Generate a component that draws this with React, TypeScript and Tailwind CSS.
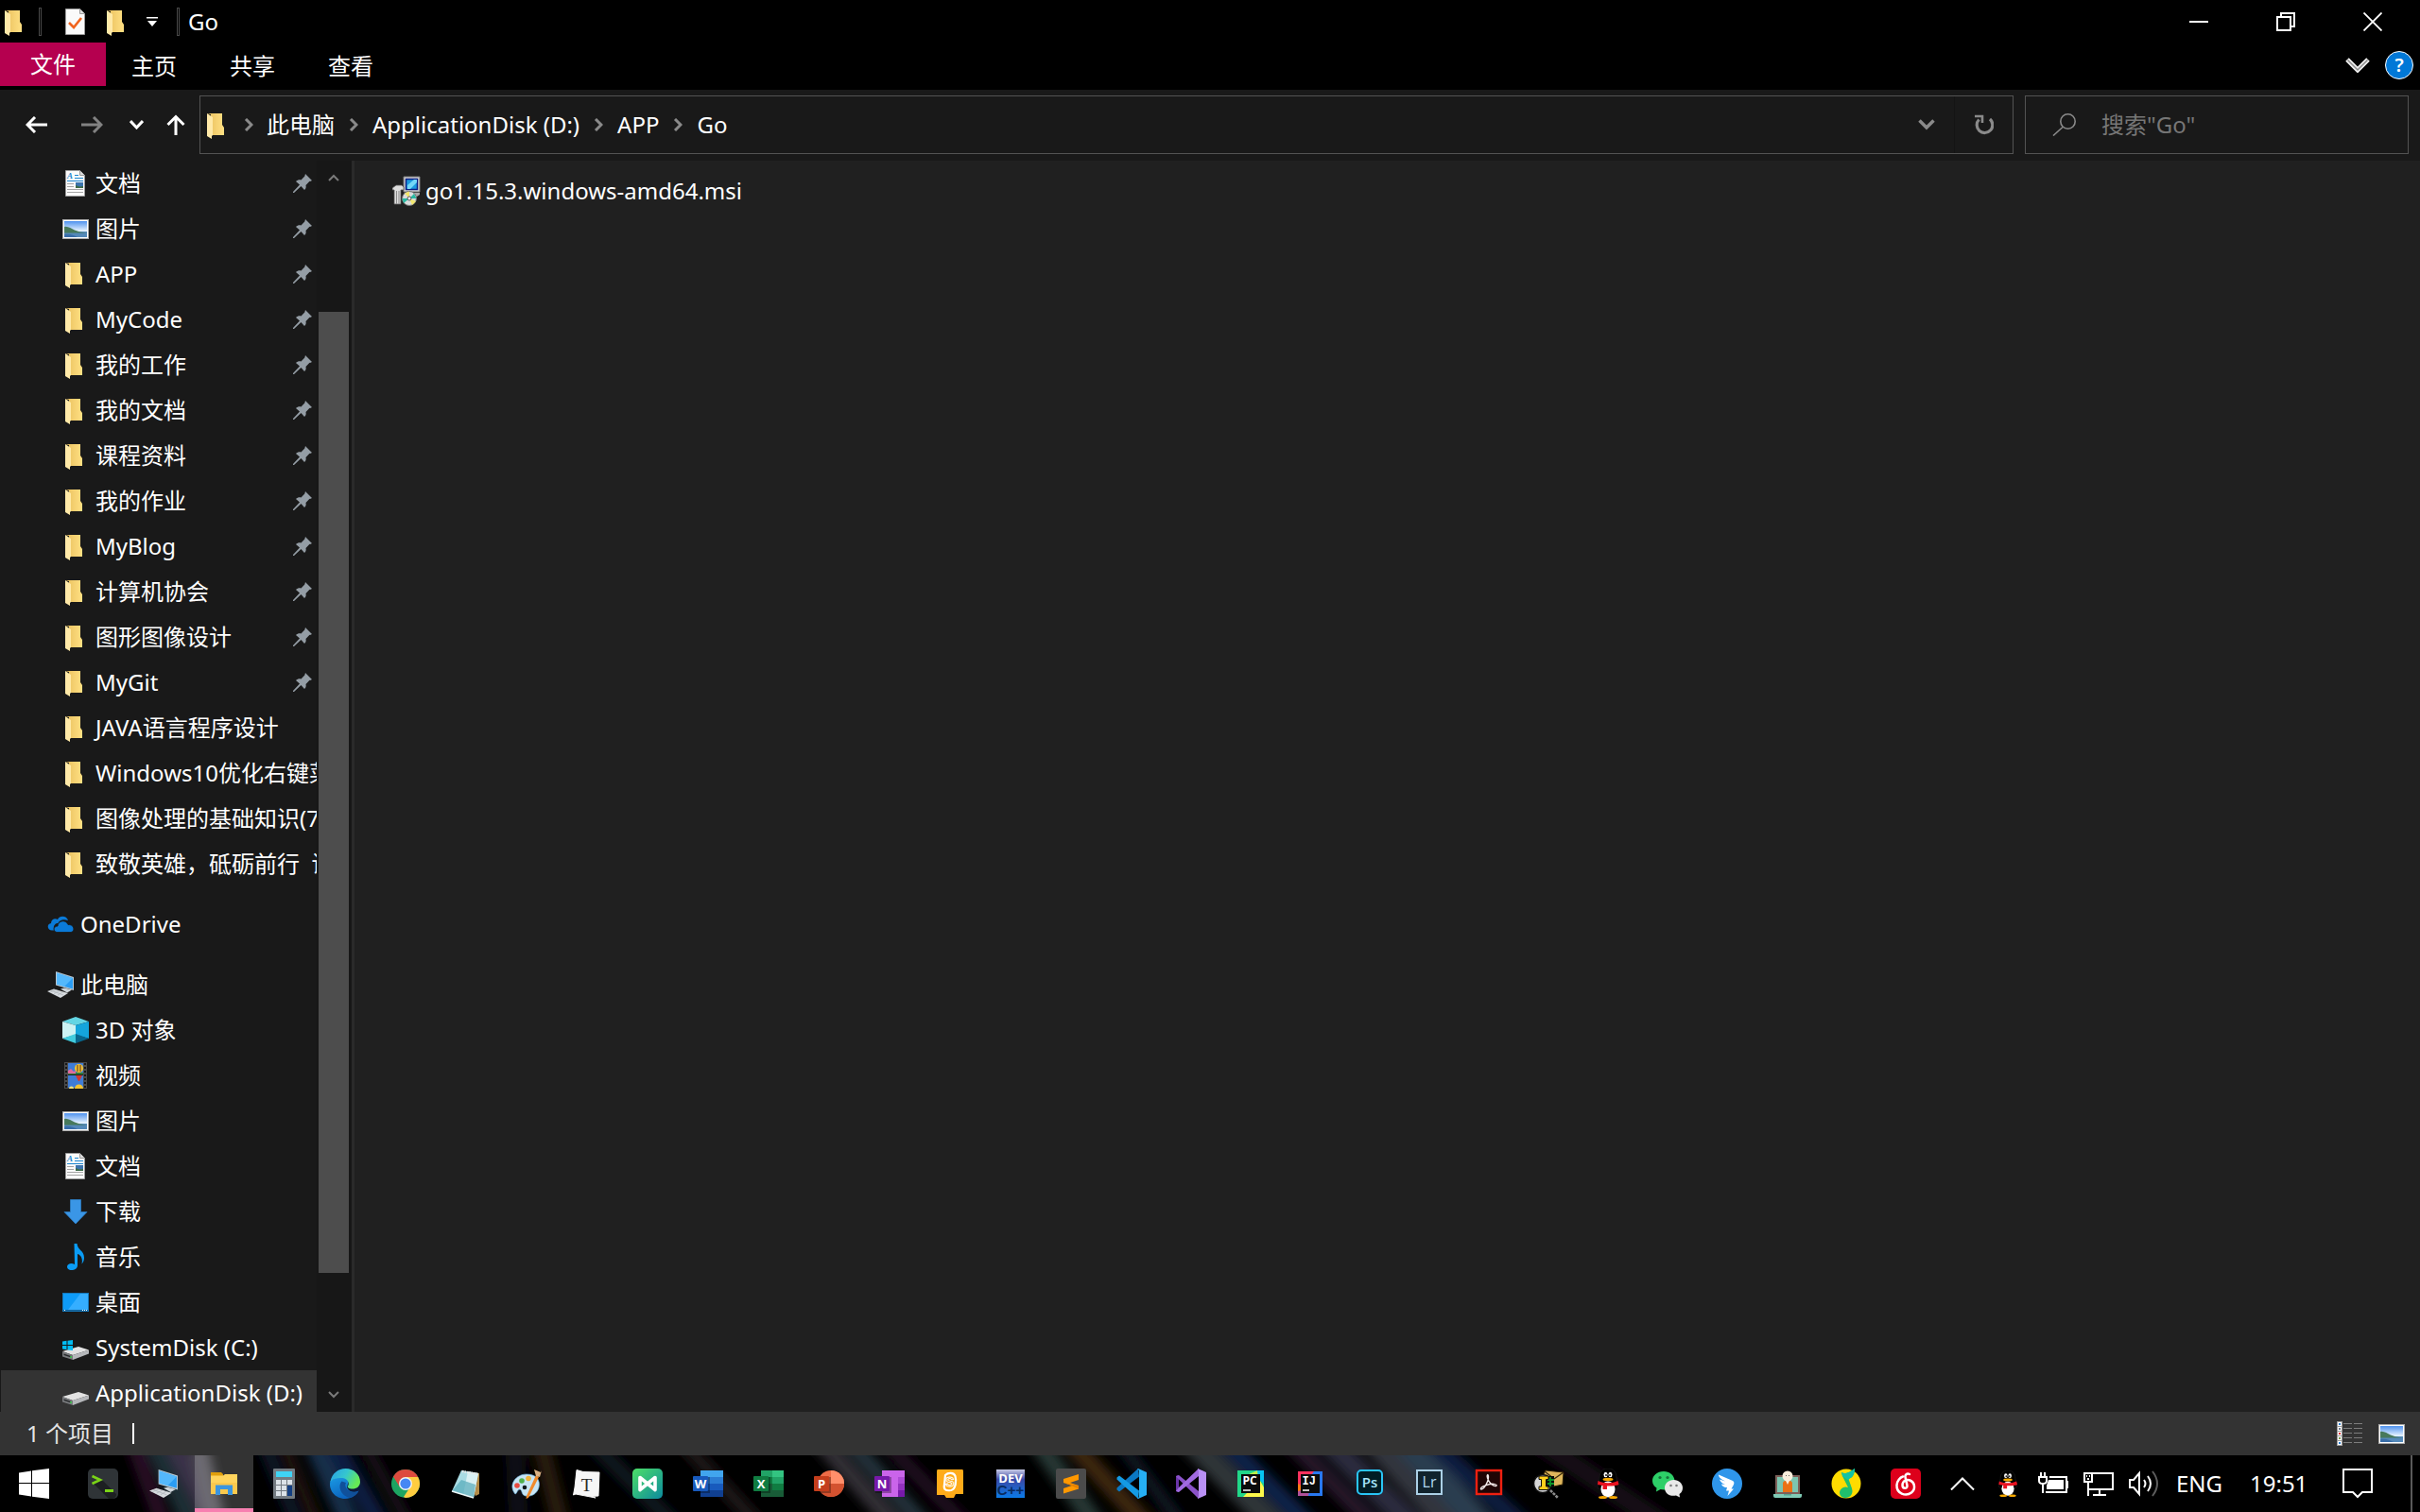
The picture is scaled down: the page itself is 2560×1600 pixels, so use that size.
import React from 'react';

type IconProps = { className?: string };

/* ---------- explorer icons, 28px grid ---------- */

function FolderIcon({ className = 'size-7' }: IconProps) {
  return (
    <svg viewBox="0 0 28 28" className={`${className} shrink-0 overflow-visible`}>
      <defs>
        <linearGradient id="folderBack" x1="0" x2="1">
          <stop offset="0" stopColor="#e9bf5c" />
          <stop offset="1" stopColor="#ffe083" />
        </linearGradient>
      </defs>
      <path d="M3 2H19V14L21 17V25H7V3Z" fill="url(#folderBack)" />
      <path d="M3 2L9 6V25L8 26V29L3 26Z" fill="#ffe9a8" />
    </svg>
  );
}

function DocumentIcon() {
  return (
    <svg viewBox="0 0 28 28" className="size-7 shrink-0">
      <path d="M3.500 .500H18.500L23.500 5.500V27.500H3.500Z" fill="#fafafa" stroke="#9b9b9b" />
      <path d="M18.500 .500V5.500H23.500" fill="#ddd" stroke="#9b9b9b" />
      <text x="5" y="9" fontSize="9" fontWeight="bold" fontStyle="italic" fill="#1b86d0" className="font-['Liberation_Serif',serif]">A</text>
      <path d="M13 5.500H17M13 8.500H22M5 11.500H22" stroke="#1b86d0" />
      <path d="M5 14.500H12M5 17.500H12M5 20.500H22M5 23.500H22" stroke="#a5a5a5" />
      <rect x="14" y="13" width="8" height="6" fill="#3b74ad" />
      <path d="M14 16L18 17.500L22 17V19H14Z" fill="#3d6b48" />
    </svg>
  );
}

function PictureIcon() {
  return (
    <svg viewBox="0 0 28 28" className="size-7 shrink-0">
      <defs>
        <linearGradient id="sky" x1="0" y1="0" x2="0" y2="1">
          <stop offset="0" stopColor="#4f92ee" />
          <stop offset=".6" stopColor="#e4f1ff" />
        </linearGradient>
      </defs>
      <rect x=".5" y="4.500" width="27" height="20" fill="#fff" stroke="#a8a8a8" />
      <rect x="2" y="6" width="24" height="17" fill="url(#sky)" />
      <path d="M2 17H26V23H2Z" fill="#5489b9" />
      <path d="M2 12C6 11 9 14 13 15.500S20 18 26 18.500H2Z" fill="#47795b" />
      <path d="M2 20C8 19 12 21 16 23H2Z" fill="#386da8" />
    </svg>
  );
}

function OneDriveIcon() {
  return (
    <svg viewBox="0 0 28 28" className="size-7 shrink-0">
      <path d="M5 20.500C0 20.500 -1 13.500 4 13C4 9 8 7 11 9C13 4 21 5 22 10C16 8 12 11 11.500 13C8 13 6 16 7 20.500Z" fill="#0a7ad8" />
      <path d="M10 22.500C6 22 6 16 11 16C11 11 19 8 22 14.500C29 14 29.500 22 25 22.500Z" fill="#0a7ad8" stroke="#191919" strokeWidth=".8" />
    </svg>
  );
}

function ComputerIcon({ className = 'size-7' }: IconProps) {
  return (
    <svg viewBox="0 0 28 28" className={`${className} shrink-0`}>
      <path d="M9 0L28 6V20L9 14.500Z" fill="#b9c9d4" />
      <path d="M10 1.500L27 7V18.500L10 13.500Z" fill="#2a9df4" />
      <path d="M10 1.500L27 7L18 16L10 13.500Z" fill="#54b8fb" />
      <path d="M14 18.500L18 17.500L26 19.500L21 22.500Z" fill="#cfd6db" />
      <path d="M0 21L7 18.500L22 23L14 28Z" fill="#d7dbdf" />
      <path d="M3 22L9 19.500M7 23.500L13 20.500M11 25L17 21.500M4 20L17 25" stroke="#a7aeb4" strokeWidth=".6" />
    </svg>
  );
}

function CubeIcon() {
  return (
    <svg viewBox="0 0 28 28" className="size-7 shrink-0">
      <path d="M14 0L28 5L14 9L0 5Z" fill="#63d5e3" />
      <path d="M0 5L14 9V19L0 23Z" fill="#cdf2f3" />
      <path d="M28 5L14 9V19L28 23Z" fill="#14a5dc" />
      <path d="M0 23L14 18V28Z" fill="#41cbdd" />
      <path d="M28 23L14 18V28Z" fill="#08678d" />
    </svg>
  );
}

function VideoIcon() {
  return (
    <svg viewBox="0 0 28 28" className="size-7 shrink-0">
      <path d="M2 0H26V28H2Z" fill="#4b4b4b" />
      <path d="M4 1V28M24 1V28" stroke="#171717" strokeWidth="2" strokeDasharray="2 2" />
      <path d="M6 1H22V27H6Z" fill="#3f7cd6" />
      <path d="M6 11H22V13H6Z" fill="#2f7b3a" />
      <path d="M6 13H22V14H6Z" fill="#222" />
      <path d="M6 9L9 7L12 10L14 9V12H6Z" fill="#e26a9b" />
      <circle cx="17.500" cy="6.500" r="4.500" fill="#f4c430" />
      <path d="M16 3V10M19 3V10" stroke="#5a2a20" />
      <path d="M14 14H21L18 20H17Z" fill="#d2372c" />
      <path d="M13 28A4.500 4.500 0 0 1 22 28Z" fill="#f4c430" />
      <path d="M7 28A2.500 2.500 0 0 1 12 28Z" fill="#f2e27b" />
    </svg>
  );
}

function DownloadIcon() {
  return (
    <svg viewBox="0 0 28 28" className="size-7 shrink-0">
      <path d="M8.500 1.500H19.500V14.500H26L14 27L2 14.500H8.500Z" fill="#3a96e6" stroke="#2d7fc7" strokeWidth=".8" />
    </svg>
  );
}

function MusicIcon() {
  return (
    <svg viewBox="0 0 28 28" className="size-7 shrink-0">
      <path d="M12.500 0H15.500C16 7 23 7 23 15C23 18 22 20 20.500 21.500C22 15 19 12 16 11V23C16 29 5 30 5 24.500C5 21 10 20 13 22Z" fill="#0a9cf5" />
    </svg>
  );
}

function DesktopIcon() {
  return (
    <svg viewBox="0 0 28 28" className="size-7 shrink-0">
      <rect x=".5" y="4.500" width="27" height="19" fill="#0e9bf8" stroke="#1579bd" />
      <path d="M19 5H27V22H6Z" fill="#35aeff" />
      <path d="M1 22.500H27" stroke="#125e93" />
      <path d="M2 22.500H3M21 22.500H22M23 22.500H24M25 22.500H26" stroke="#fff" />
    </svg>
  );
}

function DriveIcon({ system = false }: { system?: boolean }) {
  return (
    <svg viewBox="0 0 28 28" className="size-7 shrink-0">
      <path d="M0 18L17 13L28 16.500L11 22Z" fill="#e3e3e3" />
      <path d="M28 16.500V20.500L11 27V22Z" fill="#b5b7ba" />
      <path d="M0 18L11 22V27L0 23.500Z" fill="#77797c" />
      <path d="M1.500 20.500L9 23V24.500L1.500 22Z" fill="#26282a" />
      <path d="M8 24H10" stroke="#3ad14a" strokeWidth="1.500" />
      {system && <path d="M0 7.500L4.500 6.800V11H0ZM5.500 6.700L11 6V11H5.500ZM0 12H4.500V16.300L0 15.600ZM5.500 12H11V17L5.500 16.400Z" fill="#00bcf2" />}
    </svg>
  );
}

function PinIcon() {
  return (
    <svg viewBox="0 0 20 20" className="mr-[5px] ml-auto size-5 shrink-0">
      <path d="M13 0L20 7L18 8L17.500 7.800L13.500 12C14 14 13.500 16 12 17L8.500 13L1 20H0V19L7 11.500L3 8C4.500 6.500 6.500 6 8.500 6.500L12.300 2.500Z" fill="#949da5" />
    </svg>
  );
}

function InstallerIcon() {
  return (
    <svg viewBox="0 0 30 32" className="h-8 w-[30px] shrink-0">
      <path d="M12 1H29V17H12Z" fill="#d8d8d8" stroke="#777" />
      <path d="M14.500 3.500H26.500V14.500H14.500Z" fill="#1b9ae0" stroke="#0b1e83" strokeWidth="1.500" />
      <path d="M16 10L23 4H26V7L19 14H16Z" fill="#73d7f7" />
      <path d="M18 18H29V20L26 22H18Z" fill="#a9a9a9" />
      <path d="M0 13L4 10H10L12 12V15H9V30H2V15H0Z" fill="#dedede" stroke="#555" strokeWidth=".8" />
      <path d="M4.500 16V30M7 16V30" stroke="#8b8b8b" />
      <circle cx="18" cy="24" r="7.500" fill="#d9dcdc" stroke="#747474" />
      <path d="M18 24L13 18.500L18 16.500ZM18 24L21 31L25 27Z" fill="#f2e66d" />
      <path d="M18 24L25.500 24L23 19ZM18 24L12 29L10.500 24Z" fill="#28b9a2" />
      <circle cx="18" cy="24" r="2" fill="#fff" stroke="#555" />
    </svg>
  );
}

function Chevron({ className = '' }: IconProps) {
  return (
    <svg viewBox="0 0 10 14" fill="none" strokeWidth="3" className={`h-[14px] w-[10px] shrink-0 stroke-[#8a8a8a] ${className}`}>
      <path d="M2 1L8 7L2 13" />
    </svg>
  );
}

/* ---------- sidebar data ---------- */

type Row = { label: string; icon: React.ReactNode; pinned?: boolean; root?: boolean; active?: boolean };

const quickAccess: Row[] = [
  { label: '文档', icon: <DocumentIcon />, pinned: true },
  { label: '图片', icon: <PictureIcon />, pinned: true },
  { label: 'APP', icon: <FolderIcon />, pinned: true },
  { label: 'MyCode', icon: <FolderIcon />, pinned: true },
  { label: '我的工作', icon: <FolderIcon />, pinned: true },
  { label: '我的文档', icon: <FolderIcon />, pinned: true },
  { label: '课程资料', icon: <FolderIcon />, pinned: true },
  { label: '我的作业', icon: <FolderIcon />, pinned: true },
  { label: 'MyBlog', icon: <FolderIcon />, pinned: true },
  { label: '计算机协会', icon: <FolderIcon />, pinned: true },
  { label: '图形图像设计', icon: <FolderIcon />, pinned: true },
  { label: 'MyGit', icon: <FolderIcon />, pinned: true },
  { label: 'JAVA语言程序设计', icon: <FolderIcon /> },
  { label: 'Windows10优化右键菜', icon: <FolderIcon /> },
  { label: '图像处理的基础知识(7', icon: <FolderIcon /> },
  { label: '致敬英雄，砥砺前行  讲', icon: <FolderIcon /> },
];

const thisPc: Row[] = [
  { label: '此电脑', icon: <ComputerIcon />, root: true },
  { label: '3D 对象', icon: <CubeIcon /> },
  { label: '视频', icon: <VideoIcon /> },
  { label: '图片', icon: <PictureIcon /> },
  { label: '文档', icon: <DocumentIcon /> },
  { label: '下载', icon: <DownloadIcon /> },
  { label: '音乐', icon: <MusicIcon /> },
  { label: '桌面', icon: <DesktopIcon /> },
  { label: 'SystemDisk (C:)', icon: <DriveIcon system /> },
  { label: 'ApplicationDisk (D:)', icon: <DriveIcon />, active: true },
];

function NavGroup({ rows }: { rows: Row[] }) {
  return (
    <ul>
      {rows.map((row, i) => (
        <li key={i} className={row.active ? 'ml-px bg-[#333333]' : 'ml-px'}>
          <button className={`flex h-12 w-full items-center gap-[7px] text-left whitespace-pre hover:bg-[#2b2b2b] ${row.root ? 'pl-[49px]' : 'pl-[65px]'}`}>
            {row.icon}
            <span>{row.label}</span>
            {row.pinned && <PinIcon />}
          </button>
        </li>
      ))}
    </ul>
  );
}

/* ---------- taskbar icons, 32px grid ---------- */

function Tile({ children }: { children: React.ReactNode }) {
  return (
    <svg viewBox="0 0 32 32" className="size-8 shrink-0 overflow-visible">
      {children}
    </svg>
  );
}

function OfficeTile({ letter, dark, children }: { letter: string; dark: string; children: React.ReactNode }) {
  return (
    <Tile>
      {children}
      <rect x="1" y="9" width="17" height="17" fill="#000" opacity=".3" />
      <rect x="0" y="8" width="16" height="16" rx="1" fill={dark} />
      <text x="8" y="20.500" textAnchor="middle" fontSize="13" fontWeight="bold" fill="#fff" className="font-['Open_Sans',sans-serif]">{letter}</text>
    </Tile>
  );
}

function Penguin({ className = 'size-8' }: IconProps) {
  return (
    <svg viewBox="0 0 32 32" className={`${className} shrink-0`}>
      <path d="M16 0C22 0 25 4 25 10L26 15L27 20L24 22C24 28 21 31 16 31S8 28 8 22L5 20L6 15L7 10C7 4 10 0 16 0Z" fill="#000" stroke="#161616" />
      <ellipse cx="16" cy="22" rx="7.500" ry="8.500" fill="#fff" />
      <ellipse cx="13.500" cy="6.500" rx="2" ry="2.700" fill="#fff" />
      <ellipse cx="18.500" cy="6.500" rx="2" ry="2.700" fill="#fff" />
      <circle cx="14" cy="7" r=".9" />
      <circle cx="18" cy="7" r=".9" />
      <ellipse cx="16" cy="11.500" rx="5.500" ry="1.700" fill="#f5a800" />
      <path d="M5.500 13C12 16 20 16 26.500 13L27.500 17C24 18.500 19 18.700 15 18.500V22H10.500V18L5 17Z" fill="#e9121f" />
      <ellipse cx="10.500" cy="30.500" rx="4.500" ry="1.500" fill="#f5a800" />
      <ellipse cx="21.500" cy="30.500" rx="4.500" ry="1.500" fill="#f5a800" />
    </svg>
  );
}

const wideApps = [
  {
    name: 'Terminal',
    icon: (
      <Tile>
        <rect width="32" height="32" rx="5" fill="#2f3437" />
        <path d="M5 15L14 11L30 27V28A5 5 0 0 1 27 32H22Z" fill="#1d2022" />
        <path d="M4.500 8L13 12L4.500 16" fill="none" stroke="#7ad317" strokeWidth="2.600" />
        <path d="M18 23.500H27" stroke="#7ad317" strokeWidth="3" />
      </Tile>
    ),
  },
  { name: '此电脑', icon: <ComputerIcon className="size-[30px]" /> },
  {
    name: '文件资源管理器',
    active: true,
    icon: (
      <Tile>
        <path d="M2 4H13L15 6V9H2Z" fill="#e09f0c" />
        <path d="M2 7.500H15L17 6H30V27H2Z" fill="#ffd45d" />
        <path d="M2 15H30V27H2Z" fill="#fbc94d" />
        <path d="M7 28V17.500H25V28H20V22H12V28Z" fill="#3b95df" />
      </Tile>
    ),
  },
  {
    name: '计算器',
    icon: (
      <Tile>
        <rect x="4" y="0" width="23" height="32" rx="1" fill="#737b82" />
        <rect x="7" y="3" width="17" height="6" fill="#3fd3f5" />
        <path d="M7 12H12V17H7ZM13 12H18V17H13ZM19 12H24V17H19ZM7 18H12V23H7ZM13 18H18V23H13ZM7 24H12V29H7ZM13 24H18V29H13Z" fill="#dbe2e8" />
        <rect x="19" y="18" width="5" height="11" fill="#143f82" />
      </Tile>
    ),
  },
  {
    name: 'Edge',
    icon: (
      <Tile>
        <defs>
          <linearGradient id="edgeTop" x1="0" y1="0" x2="1" y2=".4">
            <stop offset=".1" stopColor="#2aa7e4" />
            <stop offset=".55" stopColor="#35c6cf" />
            <stop offset="1" stopColor="#66ea55" />
          </linearGradient>
          <linearGradient id="edgeLeft" x1="0" y1="0" x2=".5" y2="1">
            <stop offset="0" stopColor="#1b9ee6" />
            <stop offset="1" stopColor="#0b62be" />
          </linearGradient>
        </defs>
        <path d="M.5 13C-2 23 6 32 16 32C23 32 28 28 30.500 23.500C26 26 20 25 18 20L20 12L12 7Z" fill="url(#edgeLeft)" />
        <path d="M12.500 13.500C8 18 11 29 21 31C25 30 29 27 30.500 23.500C27 26 20 25.500 17.500 21C16 18.500 16 17 17 15Z" fill="#10509a" />
        <path d="M.5 14C2 5 9 0 16.500 0C26 0 32 7 32 14C32 19 28 21.500 24 21.500C20 21.500 18 20 19 18.500C21 16 19 10.500 13.500 10C8 9.500 3 11 .5 14Z" fill="url(#edgeTop)" />
      </Tile>
    ),
  },
  {
    name: 'Chrome',
    icon: (
      <Tile>
        <circle cx="16" cy="16" r="15" fill="#1da462" />
        <path d="M29 8.500A15 15 0 0 1 16 31L14 30L22 18L16 9H29.200Z" fill="#ffcd40" />
        <path d="M16 9H29.200A15 15 0 0 0 3 8.500L9.500 19Z" fill="#dd4b3e" />
        <circle cx="16" cy="16" r="7" fill="#f3f3f3" />
        <circle cx="16" cy="16" r="5.600" fill="#4687f4" />
      </Tile>
    ),
  },
  {
    name: '记事本',
    icon: (
      <Tile>
        <path d="M13 3L30 5V27L26 29Z" fill="#b28a47" />
        <path d="M11 2L29 5L24 31L1 24Z" fill="#a9dce4" />
        <path d="M18 3L29 5L24 31L13 27.500Z" fill="#d9f1f4" />
        <path d="M11 12L26 17L24 31L1 24Z" fill="#56a9b9" opacity=".7" />
        <path d="M12 3L28 6" stroke="#e8e8e8" strokeWidth="2.500" strokeDasharray="1.500 1" />
        <path d="M1 24L24 31" stroke="#edf8fa" strokeWidth="1.500" />
      </Tile>
    ),
  },
  {
    name: '画图',
    icon: (
      <Tile>
        <path d="M4 27C-4 17 5 6 16 6C26 6 31 12 29 20C27 27 21 30 15 29C10 28 12 23 9 22C6 22 6 27 4 27Z" fill="#c7e4f5" stroke="#6fb1d8" strokeWidth=".7" />
        <circle cx="6" cy="18" r="2.800" fill="#e84a3f" />
        <circle cx="11" cy="13" r="2.800" fill="#4fb04d" />
        <circle cx="18" cy="10.500" r="2.800" fill="#f0b33c" />
        <circle cx="14" cy="20" r="2.300" fill="#11161c" />
        <path d="M26 7L29 9L18 31L15.500 32L16 29Z" fill="#f08a2c" />
        <path d="M24 1L31 4L32 2L30 9L26 8Z" fill="#d9b083" />
      </Tile>
    ),
  },
  {
    name: 'Typora',
    icon: (
      <Tile>
        <path d="M5 1.500L12 3.500L29 4L28 29L21 29.500L25 31L4 27L1.500 28L3 20Z" fill="#f6f6f6" stroke="#f6f6f6" strokeLinejoin="round" />
        <text x="15.500" y="23.500" fontSize="19" textAnchor="middle" fill="#2b2b2b" className="font-['Liberation_Serif',serif]">T</text>
      </Tile>
    ),
  },
  {
    name: 'MindMaster',
    icon: (
      <Tile>
        <defs>
          <linearGradient id="mind" x1="0" y1="0" x2="1" y2="1">
            <stop offset="0" stopColor="#4ddf67" />
            <stop offset="1" stopColor="#0c8b9e" />
          </linearGradient>
        </defs>
        <rect width="32" height="32" rx="5" fill="url(#mind)" />
        <path d="M8 22.500V9.500L24 22.500V9.500L8 22.500Z" fill="none" stroke="#fff" strokeWidth="3.600" strokeLinejoin="round" />
      </Tile>
    ),
  },
  {
    name: 'Word',
    icon: (
      <OfficeTile letter="W" dark="#185abd">
        <path d="M8 2H32V9H8Z" fill="#41a5ee" />
        <path d="M8 9H32V16H8Z" fill="#2b7cd3" />
        <path d="M8 16H32V23H8Z" fill="#185abd" />
        <path d="M8 23H32V30H8Z" fill="#103f91" />
      </OfficeTile>
    ),
  },
  {
    name: 'Excel',
    icon: (
      <OfficeTile letter="X" dark="#107c41">
        <path d="M8 2H20V9H8Z" fill="#21a366" />
        <path d="M20 2H32V9H20Z" fill="#33c481" />
        <path d="M8 9H20V16H8Z" fill="#107c41" />
        <path d="M20 9H32V16H20Z" fill="#21a366" />
        <path d="M8 16H20V30H8Z" fill="#185c37" />
        <path d="M20 16H32V23H20Z" fill="#107c41" />
        <path d="M20 23H32V30H20Z" fill="#185c37" />
      </OfficeTile>
    ),
  },
  {
    name: 'PowerPoint',
    icon: (
      <OfficeTile letter="P" dark="#c43e1c">
        <circle cx="18" cy="16" r="14" fill="#ed6c47" />
        <path d="M18 2A14 14 0 0 1 32 16H18Z" fill="#ff8f6b" />
        <path d="M4 16H32A14 14 0 0 1 4 16Z" fill="#d35230" />
      </OfficeTile>
    ),
  },
  {
    name: 'OneNote',
    icon: (
      <OfficeTile letter="N" dark="#7719aa">
        <path d="M8 2H32V30H8Z" fill="#ca64ea" />
        <path d="M25 9H32V16H25Z" fill="#ae4bd5" />
        <path d="M25 16H32V23H25Z" fill="#9332bf" />
        <path d="M25 23H32V30H25Z" fill="#7719aa" />
      </OfficeTile>
    ),
  },
  {
    name: 'Scratch',
    icon: (
      <Tile>
        <path d="M3 1H29Q30 1 30 3V27H22L20 31H12L10 28H2V3Q2 1 3 1Z" fill="#ffab19" />
        <path d="M11 7C14 4 20 4 21.500 8C23 13 22 22 17 23C11 24 9 22 10 17Z" fill="#ffab19" stroke="#fff" strokeWidth="2.200" />
        <text x="16" y="19" fontSize="14" fontWeight="bold" textAnchor="middle" fill="#ffab19" stroke="#fff" strokeWidth=".9" className="font-['Liberation_Sans',sans-serif]">S</text>
      </Tile>
    ),
  },
  {
    name: 'Dev-C++',
    icon: (
      <Tile>
        <defs>
          <linearGradient id="dev" x1="0" y1="0" x2="0" y2="1">
            <stop offset="0" stopColor="#c9cbe6" />
            <stop offset=".35" stopColor="#3a48a6" />
            <stop offset="1" stopColor="#0a7be8" />
          </linearGradient>
        </defs>
        <rect x="1" y="1" width="30" height="30" fill="url(#dev)" />
        <text x="16" y="15" fontSize="13" fontWeight="bold" textAnchor="middle" fill="#fff" className="font-['Open_Sans',sans-serif]">DEV</text>
        <text x="16" y="28" fontSize="15" fontWeight="bold" textAnchor="middle" fill="#082c5f" className="font-['Liberation_Sans',sans-serif]">C++</text>
      </Tile>
    ),
  },
  {
    name: 'Sublime Text',
    icon: (
      <Tile>
        <rect width="32" height="32" rx="2" fill="#4b4b4b" />
        <path d="M8 11L24 6V12L15 15L24 18V21.500L8 26.500V21L17 18L8 15Z" fill="#ff9800" />
        <path d="M8 15L24 18V21.500L15 17.500Z" fill="#e58100" />
      </Tile>
    ),
  },
];

const narrowApps = [
  {
    name: 'VS Code',
    icon: (
      <Tile>
        <path d="M24 8.500L3 24.500L.5 22.500V20.500L23 0Z" fill="#0a79c4" />
        <path d="M24 23.500L3 7.500L.5 9.500V11.500L23 32Z" fill="#149ae4" />
        <path d="M23 0L32 4V28L23 32L22 31C24 31 24 30 24 29V3C24 1.500 23 1 22 1Z" fill="#26aef3" />
      </Tile>
    ),
  },
  {
    name: 'Visual Studio',
    icon: (
      <Tile>
        <path d="M0 8L3 7V25L0 24Z" fill="#6a35a8" />
        <path d="M0 8L3 7L24 24V32L1 9.500Z" fill="#8a52c8" />
        <path d="M0 24L3 25L24 8V0L3 20Z" fill="#a06ae0" />
        <path d="M23 0L32 4V28L23 32L24 29V3Z" fill="#b990f5" />
      </Tile>
    ),
  },
  {
    name: 'PyCharm',
    icon: (
      <Tile>
        <path d="M2 2H30V30H2Z" fill="#21d789" />
        <path d="M20 2H30V16L20 8Z" fill="#07c3f2" />
        <path d="M12 7L23 2L24 10Z" fill="#b9ef4a" />
        <path d="M26 13L30 20V30H8L14 24Z" fill="#fcf84a" />
        <rect x="6" y="6" width="20" height="20" fill="#0b0b0b" />
        <text x="7.500" y="17" fontSize="12" fontWeight="bold" fill="#fff" className="font-['Open_Sans',sans-serif]">PC</text>
        <path d="M8 23H16" stroke="#fff" strokeWidth="1.500" />
      </Tile>
    ),
  },
  {
    name: 'IntelliJ IDEA',
    icon: (
      <Tile>
        <path d="M3 3H29V29H3Z" fill="#2878f0" />
        <path d="M3 3H20L12 14L3 20Z" fill="#fe315d" />
        <path d="M3 16L10 20L8 29H3Z" fill="#f97a12" />
        <path d="M3 24L16 20L14 29H3Z" fill="#b0509a" />
        <rect x="6" y="6" width="20" height="20" fill="#0b0b0b" />
        <text x="7.500" y="17" fontSize="12" fontWeight="bold" fill="#fff" className="font-['Liberation_Mono',monospace]">IJ</text>
        <path d="M8 23H15" stroke="#fff" strokeWidth="1.500" />
      </Tile>
    ),
  },
  {
    name: 'Photoshop',
    icon: (
      <Tile>
        <rect x="3" y="2" width="26" height="25" rx="4" fill="#001d26" stroke="#29c5f6" strokeWidth="2" />
        <text x="16" y="20" fontSize="15" fontWeight="600" textAnchor="middle" fill="#a6e4fb" className="font-['Open_Sans',sans-serif]">Ps</text>
      </Tile>
    ),
  },
  {
    name: 'Lightroom',
    icon: (
      <Tile>
        <rect x="3" y="2" width="26" height="25" fill="#11232d" stroke="#abd0e6" strokeWidth="2" />
        <text x="16" y="20" fontSize="16" textAnchor="middle" fill="#b0d9f2" className="font-['Open_Sans',sans-serif]">Lr</text>
      </Tile>
    ),
  },
  {
    name: 'Acrobat',
    icon: (
      <Tile>
        <rect x="3" y="2" width="26" height="25" fill="#200505" stroke="#ee2010" strokeWidth="2.400" />
        <path d="M8 22C11 22 16 13 15.500 8C15 5 13.500 7 14.500 10C16 15 20 19 23.500 18.500C26 17.500 21 15.500 17 16.500S8 19 7.500 21C7.300 22 7.500 22 8 22Z" fill="none" stroke="#f4eaea" strokeWidth="1.300" />
      </Tile>
    ),
  },
  {
    name: '邮件搜索',
    icon: (
      <Tile>
        <path d="M13 2L32 4L31 17L17 20L10 8Z" fill="#dfb65c" stroke="#2c2008" />
        <path d="M12 3L22 11L32 4" fill="none" stroke="#3a2a0a" strokeWidth="1.400" />
        <path d="M18 23L26 31" stroke="#8a8a8a" strokeWidth="2.600" strokeDasharray="3 1" />
        <circle cx="10" cy="16" r="9.500" fill="#d6d6d6" stroke="#111" strokeWidth="1.500" />
        <path d="M14 8H22V20H14Z" fill="#0b0f0b" />
        <path d="M18 9V19M15 12H22M15 16H22" stroke="#109428" strokeWidth="1.800" />
        <path d="M6 8H16V11.500H13.500V19H16V22.500H6V19H8.500V11.500H6Z" fill="#ffcf1c" stroke="#111" />
      </Tile>
    ),
  },
  { name: 'QQ', icon: <Penguin /> },
  {
    name: '微信',
    icon: (
      <Tile>
        <path d="M12 3C5 3 0 7.500 0 13C0 16.500 2 19 4.500 20.500L4 24.500L8.500 22C18 24 24 19 23.500 12.500C23 7 18 3 12 3Z" fill="#2dcf68" />
        <circle cx="8" cy="9.500" r="1.600" fill="#16703a" />
        <circle cx="16" cy="9.500" r="1.600" fill="#16703a" />
        <path d="M22.500 12C17 12 13 16 13 20.500C13 26 18 30 25 28.500L29 30.500L28.500 27C31 25.500 32 23 32 20.500C32 16 28 12 22.500 12Z" fill="#e9e9e9" />
        <circle cx="19.500" cy="18" r="1.300" fill="#7b7b7b" />
        <circle cx="25.500" cy="18" r="1.300" fill="#7b7b7b" />
      </Tile>
    ),
  },
  {
    name: '钉钉',
    icon: (
      <Tile>
        <circle cx="16" cy="16" r="16" fill="#2f96ea" />
        <path d="M7 6.500L22 13C24 14 23.500 16 22.500 18L20.500 21.500H23L16.500 29L18 23.500H15L16 20C12 20 10.500 18 10 16.500L14 17C10 15.500 8.500 13 8 11.500L14 13.500C9 11 7 9 7 6.500Z" fill="#fff" />
      </Tile>
    ),
  },
  {
    name: '在线课堂',
    icon: (
      <Tile>
        <rect x="4" y="7" width="26" height="20" fill="#7d5f58" />
        <rect x="6" y="9" width="22" height="16" fill="#7cc5b0" />
        <circle cx="17" cy="8" r="5.500" fill="#f9eedc" />
        <path d="M15 7.500H15.800M18.200 7.500H19" stroke="#444" strokeWidth="1.200" />
        <path d="M12 16Q12 13 15 13H19Q22 13 22 16V25H12Z" fill="#ea7116" />
        <path d="M15 13H19L17 17Z" fill="#f9eedc" />
        <path d="M2 27H32V29Q32 31 30 31H4Q2 31 2 29Z" fill="#7fcab5" />
        <path d="M13 27H21V28.500H13Z" fill="#53a390" />
      </Tile>
    ),
  },
  {
    name: 'QQ音乐',
    icon: (
      <Tile>
        <circle cx="16" cy="16" r="15.500" fill="#ffdc00" />
        <path d="M11 4C15 7 21 3 25 0C25 7 22 10 18.500 11L22 21C24 27 20 31 15 31C10 31 7.500 26 10 22.500C12 19 16 19 18 20L12 8Z" fill="#1fbf6c" />
        <path d="M11 4C15 7 21 3 25 0C25 7 22 10 18.500 11L19 13L12 8Z" fill="#12c3a5" />
      </Tile>
    ),
  },
  {
    name: '网易云音乐',
    icon: (
      <Tile>
        <rect width="32" height="32" rx="5" fill="#dd001b" />
        <path d="M20 6C17 4.500 15 7 15.500 9L17.500 18C18 21.500 12.500 22 12.500 17.500C12.500 13 17 11 20.500 12.500C26 15 26.500 22 22 25.500C16 30 6 26.500 6.500 17.500C6.700 13 10 9.500 13 8.500" fill="none" stroke="#fff" strokeWidth="2.500" strokeLinecap="round" />
      </Tile>
    ),
  },
];

/* Blurred light trails of the wallpaper seen through the taskbar: start x, end x, width, colour */
const trails: [number, number, number, string][] = [
  [146, 168, 16, '#2c1028'],
  [168, 196, 20, '#1b2f35'],
  [190, 220, 20, '#3b3148'],
  [212, 226, 20, '#4a4650'],
  [285, 310, 16, '#0c1226'],
  [305, 330, 12, '#24180f'],
  [338, 365, 22, '#122f4a'],
  [360, 394, 20, '#0f1f42'],
  [392, 425, 14, '#130c18'],
  [545, 548, 20, '#0c1018'],
  [575, 590, 18, '#2c1a0b'],
  [640, 700, 18, '#11121a'],
  [735, 790, 16, '#1d1216'],
  [882, 935, 20, '#332f36'],
  [912, 965, 18, '#22303a'],
  [950, 1008, 14, '#230f24'],
  [1108, 1150, 20, '#253834'],
  [1145, 1200, 20, '#3d2510'],
  [1195, 1240, 14, '#0c1222'],
  [1275, 1335, 26, '#2f3539'],
  [1310, 1370, 20, '#0b2148'],
  [1380, 1440, 18, '#25142a'],
  [1420, 1480, 26, '#2b2c3c'],
  [1465, 1520, 24, '#33343e'],
  [1500, 1555, 28, '#2a3c50'],
  [1530, 1595, 20, '#0b1a40'],
  [1650, 1740, 22, '#161116'],
];

function Wallpaper() {
  return (
    <svg viewBox="0 0 2560 60" preserveAspectRatio="none" className="absolute inset-0 size-full">
      <defs>
        <filter id="soft" x="-5%" y="-50%" width="110%" height="200%">
          <feGaussianBlur stdDeviation="6" />
        </filter>
      </defs>
      <g filter="url(#soft)">
        {trails.map(([from, to, width, color]) => (
          <path key={from} d={`M${from * 2 - (from + to) / 2} -30L${to * 2 - (from + to) / 2} 90`} stroke={color} strokeWidth={width} />
        ))}
      </g>
    </svg>
  );
}

function Taskbar() {
  return (
    <footer className="relative h-[60px] shrink-0 overflow-hidden bg-black">
      <Wallpaper />
      <div className="relative flex h-full items-stretch">
        <button aria-label="开始" className="flex w-[77px] items-center pl-5">
          <Tile>
            <path d="M0 4.500L13 2.500V15H0ZM14 2.300L32 0V15H14ZM0 16H13V29.500L0 27.500ZM14 16H32V32L14 29.700Z" fill="#fff" />
          </Tile>
        </button>
        {wideApps.map((app) => (
          <button
            key={app.name}
            aria-label={app.name}
            className={`flex items-center justify-center ${app.active ? 'mx-px w-[62px] border-y-4 border-t-transparent border-b-[#f77fb0] bg-white/20' : 'w-16'}`}
          >
            {app.icon}
          </button>
        ))}
        {narrowApps.map((app) => (
          <button key={app.name} aria-label={app.name} className="flex w-[63px] items-center justify-center">
            {app.icon}
          </button>
        ))}

        <div className="ml-auto flex items-center text-white">
          <button aria-label="显示隐藏的图标" className="flex w-12 justify-center">
            <svg viewBox="0 0 26 14" fill="none" stroke="#fff" strokeWidth="2" className="h-[14px] w-[26px]">
              <path d="M1 13.500L13 1.500L25 13.500" />
            </svg>
          </button>
          <button aria-label="QQ" className="flex w-12 justify-center">
            <Penguin className="size-7" />
          </button>
          <button aria-label="电源" className="flex w-12 justify-center">
            <svg viewBox="0 0 32 24" fill="none" stroke="#fff" strokeWidth="2" className="h-6 w-8">
              <path d="M12 5H30V21H8M30 10H32V16H30" />
              <path d="M11 8H27V18H9V14Z" fill="#fff" stroke="none" />
              <path d="M3 0V5M7 0V5M1 5H9V9Q9 12 5 12Q1 12 1 9ZM5 12V22" />
            </svg>
          </button>
          <button aria-label="网络" className="flex w-12 justify-center">
            <svg viewBox="0 0 32 28" fill="none" stroke="#fff" strokeWidth="2" className="h-7 w-8">
              <path d="M9 3H31V20H5M17 20V26M10 26H24" />
              <path d="M1 3H9V12H1ZM5 12V27M3 6H4M6 6H7M5 8V10" />
            </svg>
          </button>
          <button aria-label="音量" className="flex w-12 justify-center">
            <svg viewBox="0 0 32 28" fill="none" stroke="#fff" strokeWidth="2" className="h-7 w-8">
              <path d="M1 10H5L11 3V25L5 18H1Z" />
              <path d="M16 10Q19 14 16 18M20 6Q26 14 20 22" />
              <path d="M25 1Q35 14 25 27" stroke="#5c5c5c" />
            </svg>
          </button>
          <button className="w-[72px] pl-[10px] text-left">ENG</button>
          <button className="w-[90px] pl-4 text-left">19:51</button>
          <button aria-label="通知" className="flex w-24 pl-6">
            <svg viewBox="0 0 32 32" fill="none" stroke="#fff" strokeWidth="2" className="size-8">
              <path d="M1 1H31V25H21L16 30L11 25H1Z" />
            </svg>
          </button>
          <button aria-label="显示桌面" className="h-[60px] w-[10px] border-l-2 border-[#5a5a5a]" />
        </div>
      </div>
    </footer>
  );
}

/* ---------- window ---------- */

const crumbs = ['此电脑', 'ApplicationDisk (D:)', 'APP', 'Go'];

function TitleBar() {
  return (
    <header className="flex h-[45px] shrink-0 items-center bg-black">
      <div className="flex items-center pl-[2px]">
        <FolderIcon />
        <span className="ml-[11px] h-[30px] w-[3px] border border-[#4a4a4a]" />
        <button aria-label="属性" className="ml-[22px]">
          <svg viewBox="0 0 28 28" className="size-7">
            <path d="M3.500 .500H18.500L23.500 5.500V27.500H3.500Z" fill="#fafafa" stroke="#9b9b9b" />
            <path d="M18.500 .500V5.500H23.500" fill="#ddd" stroke="#9b9b9b" />
            <path d="M7 15L12 20L20 10" fill="none" stroke="#f0641e" strokeWidth="2.600" />
          </svg>
        </button>
        <button aria-label="新建文件夹" className="ml-4">
          <FolderIcon />
        </button>
        <button aria-label="自定义快速访问工具栏" className="ml-[17px]">
          <svg viewBox="0 0 12 10" className="h-[10px] w-3 fill-white">
            <path d="M0 0H12V1.500H0ZM1 4H11L6 10Z" />
          </svg>
        </button>
        <span className="ml-5 h-[30px] w-[3px] border border-[#4a4a4a]" />
        <h1 className="ml-[9px]">Go</h1>
      </div>
      <div className="mr-1 ml-auto flex self-stretch">
        <button aria-label="最小化" className="flex w-[92px] items-center justify-center">
          <span className="h-[2px] w-5 bg-white" />
        </button>
        <button aria-label="还原" className="flex w-[92px] items-center justify-center">
          <svg viewBox="0 0 20 20" fill="none" stroke="#fff" strokeWidth="2" className="size-5">
            <path d="M1 5H15V19H1ZM5 5V1H19V15H15" />
          </svg>
        </button>
        <button aria-label="关闭" className="flex w-[92px] items-center justify-center">
          <svg viewBox="0 0 20 20" stroke="#fff" strokeWidth="1.800" className="size-5">
            <path d="M.5 .5L19.500 19.500M19.500 .5L.5 19.500" />
          </svg>
        </button>
      </div>
    </header>
  );
}

function Ribbon() {
  return (
    <div className="flex h-[50px] shrink-0 bg-black pb-1">
      <button className="w-28 bg-[#b5004f]">文件</button>
      {['主页', '共享', '查看'].map((tab) => (
        <button key={tab} className="w-[104px] pt-1 pr-[2px]">
          {tab}
        </button>
      ))}
      <div className="mr-[7px] ml-auto flex items-center gap-4 pt-[2px]">
        <button aria-label="展开功能区">
          <svg viewBox="0 0 26 16" fill="none" className="h-4 w-[26px]">
            <path d="M2 2L13 13L24 2" stroke="#f0f0f0" strokeWidth="5" />
            <path d="M2.500 2.500L13 13L23.500 2.500" stroke="#8c8c8c" strokeWidth="1.500" />
          </svg>
        </button>
        <button aria-label="帮助" className="size-[30px] rounded-full border border-white bg-[#0078d7] text-[20px] leading-7 font-semibold">
          ?
        </button>
      </div>
    </div>
  );
}

function AddressBar() {
  return (
    <div className="flex h-[75px] shrink-0 items-center bg-[#191919] pr-3 pb-[1px]">
      <button aria-label="返回" className="ml-[27px]">
        <svg viewBox="0 0 23 18" fill="none" stroke="#fff" strokeWidth="3" className="h-[18px] w-[23px]">
          <path d="M23 9H2M10 1L2 9L10 17" />
        </svg>
      </button>
      <button aria-label="前进" className="ml-9">
        <svg viewBox="0 0 23 18" fill="none" stroke="#828282" strokeWidth="3" className="h-[18px] w-[23px]">
          <path d="M0 9H21M13 1L21 9L13 17" />
        </svg>
      </button>
      <button aria-label="最近浏览的位置" className="ml-7">
        <svg viewBox="0 0 15 10" fill="none" stroke="#fff" strokeWidth="3" className="h-[10px] w-[15px]">
          <path d="M1 1L7.500 8L14 1" />
        </svg>
      </button>
      <button aria-label="上移" className="mr-[15px] ml-6">
        <svg viewBox="0 0 20 22" fill="none" stroke="#fff" strokeWidth="3" className="h-[22px] w-5">
          <path d="M10 22V2M1.500 11L10 2.500L18.500 11" />
        </svg>
      </button>

      <div className="flex h-[62px] flex-1 items-center border border-[#535353] pl-1">
        <FolderIcon />
        <ol className="flex items-center">
          {crumbs.map((crumb, i) => (
            <li key={crumb} className="flex items-center">
              <Chevron className={i === 0 ? 'mr-[14px] ml-[14px]' : 'mx-[15px]'} />
              <button>{crumb}</button>
            </li>
          ))}
        </ol>
        <button aria-label="以前的位置" className="mr-5 ml-auto">
          <svg viewBox="0 0 18 12" fill="none" stroke="#8a8a8a" strokeWidth="3.500" className="h-3 w-[18px]">
            <path d="M1.500 1.500L9 9L16.500 1.500" />
          </svg>
        </button>
        <button aria-label="刷新" className="flex h-full w-[62px] items-center justify-center border-l border-[#141414]">
          <svg viewBox="0 0 20 22" fill="none" stroke="#8a8a8a" strokeWidth="3.200" className="h-[22px] w-5">
            <path d="M16 5A8.300 8.300 0 1 1 4.500 5.500" />
            <path d="M0 2H8V9" strokeWidth="2.600" />
          </svg>
        </button>
      </div>

      <label className="ml-3 flex h-[62px] w-[406px] items-center gap-[26px] border border-[#535353] pl-7">
        <svg viewBox="0 0 26 24" fill="none" stroke="#8a8a8a" strokeWidth="1.600" className="h-6 w-[26px] shrink-0">
          <circle cx="16.500" cy="8.500" r="7.700" />
          <path d="M11 14.500L1 23.500" />
        </svg>
        <input type="search" aria-label="搜索" placeholder={'搜索"Go"'} className="w-full min-w-0 bg-transparent outline-none placeholder:text-[#767676]" />
      </label>
    </div>
  );
}

function ScrollBar() {
  return (
    <div className="flex w-[37px] flex-col bg-[#171717] pr-[3px] pl-[2px]">
      <button aria-label="向上滚动" className="flex h-9 items-center justify-center">
        <svg viewBox="0 0 12 8" fill="none" stroke="#7a7a7a" strokeWidth="2" className="h-2 w-3">
          <path d="M1 7L6 2L11 7" />
        </svg>
      </button>
      <div className="flex-[124]" />
      <div className="flex-[1017] bg-[#4d4d4d]" />
      <div className="flex-[111]" />
      <button aria-label="向下滚动" className="flex h-9 items-center justify-center">
        <svg viewBox="0 0 12 8" fill="none" stroke="#7a7a7a" strokeWidth="2" className="h-2 w-3">
          <path d="M1 1L6 6L11 1" />
        </svg>
      </button>
    </div>
  );
}

function StatusBar() {
  return (
    <div className="flex h-[46px] shrink-0 items-center bg-[#333333] pr-4 pl-7 text-[#e4e4e4]">
      <span>1 个项目</span>
      <span className="ml-5 h-[22px] w-[2px] bg-white" />
      <div className="ml-auto flex items-center gap-4">
        <button aria-label="详细信息">
          <svg viewBox="0 0 28 26" className="h-[26px] w-7">
            <path d="M0 0H6V26H0Z" fill="#9d9d9d" />
            {[1, 6, 11, 16, 21].map((y, i) => (
              <g key={y}>
                <rect x="1" y={y} width="4" height="4" fill="#fff" />
                <rect x="2" y={y + 1} width="2" height="2" fill={['#2f7fd0', '#707a8a', '#d33', '#7b9a4f', '#2f7fd0'][i]} />
                <path d={`M7 ${y + 1.5}H16M18 ${y + 1.5}H27`} stroke="#7d7d7d" />
              </g>
            ))}
          </svg>
        </button>
        <button aria-label="大缩略图">
          <PictureIcon />
        </button>
      </div>
    </div>
  );
}

export default function App() {
  return (
    <div className="flex h-screen flex-col overflow-hidden bg-[#202020] font-['Noto_Sans','Noto_Sans_CJK_SC',sans-serif] text-[24px] leading-8 text-white">
      <TitleBar />
      <Ribbon />
      <AddressBar />
      <main className="flex min-h-0 flex-1">
        <aside className="flex w-[375px] shrink-0 border-r-[3px] border-[#2a2a2a] bg-[#191919]">
          <nav className="flex w-[335px] flex-col gap-4 overflow-hidden">
            <NavGroup rows={quickAccess} />
            <NavGroup rows={[{ label: 'OneDrive', icon: <OneDriveIcon />, root: true }]} />
            <NavGroup rows={thisPc} />
          </nav>
          <ScrollBar />
        </aside>
        <section className="flex-1 pt-2 pl-10">
          <button className="flex h-[48px] items-center gap-[5px]">
            <InstallerIcon />
            <span>go1.15.3.windows-amd64.msi</span>
          </button>
        </section>
      </main>
      <StatusBar />
      <Taskbar />
    </div>
  );
}
